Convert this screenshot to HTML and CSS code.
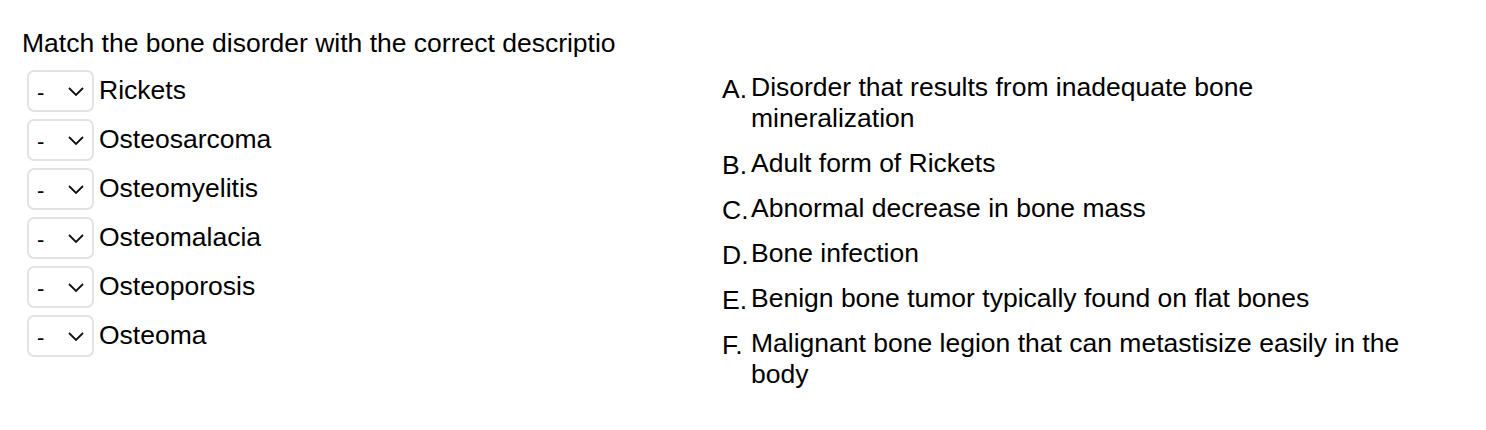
FILE: index.html
```html
<!DOCTYPE html>
<html>
<head>
<meta charset="utf-8">
<link rel="stylesheet" href="styles.css">
</head>
<body>
<div class="page">
  <div class="title">Match the bone disorder with the correct descriptio</div>
  <div class="cols">
    <div class="left">
      <div class="row"><div class="sel"><span class="dash">-</span><svg class="chev" width="16" height="9" viewBox="0 0 16 9"><path d="M1 1 L8 8 L15 1" fill="none" stroke="#111" stroke-width="1.8"/></svg></div><span class="term">Rickets</span></div>
      <div class="row"><div class="sel"><span class="dash">-</span><svg class="chev" width="16" height="9" viewBox="0 0 16 9"><path d="M1 1 L8 8 L15 1" fill="none" stroke="#111" stroke-width="1.8"/></svg></div><span class="term">Osteosarcoma</span></div>
      <div class="row"><div class="sel"><span class="dash">-</span><svg class="chev" width="16" height="9" viewBox="0 0 16 9"><path d="M1 1 L8 8 L15 1" fill="none" stroke="#111" stroke-width="1.8"/></svg></div><span class="term">Osteomyelitis</span></div>
      <div class="row"><div class="sel"><span class="dash">-</span><svg class="chev" width="16" height="9" viewBox="0 0 16 9"><path d="M1 1 L8 8 L15 1" fill="none" stroke="#111" stroke-width="1.8"/></svg></div><span class="term">Osteomalacia</span></div>
      <div class="row"><div class="sel"><span class="dash">-</span><svg class="chev" width="16" height="9" viewBox="0 0 16 9"><path d="M1 1 L8 8 L15 1" fill="none" stroke="#111" stroke-width="1.8"/></svg></div><span class="term">Osteoporosis</span></div>
      <div class="row"><div class="sel"><span class="dash">-</span><svg class="chev" width="16" height="9" viewBox="0 0 16 9"><path d="M1 1 L8 8 L15 1" fill="none" stroke="#111" stroke-width="1.8"/></svg></div><span class="term">Osteoma</span></div>
    </div>
    <div class="right">
      <div class="item"><span class="letter">A.</span><span class="desc">Disorder that results from inadequate bone mineralization</span></div>
      <div class="item"><span class="letter">B.</span><span class="desc">Adult form of Rickets</span></div>
      <div class="item"><span class="letter">C.</span><span class="desc">Abnormal decrease in bone mass</span></div>
      <div class="item"><span class="letter">D.</span><span class="desc">Bone infection</span></div>
      <div class="item"><span class="letter">E.</span><span class="desc">Benign bone tumor typically found on flat bones</span></div>
      <div class="item"><span class="letter">F.</span><span class="desc">Malignant bone legion that can metastisize easily in the body</span></div>
    </div>
  </div>
</div>
</body>
</html>
```

FILE: styles.css
```css
html, body {
  margin: 0;
  padding: 0;
  background: #fff;
}
body {
  font-family: "Liberation Sans", Arial, sans-serif;
  color: #000;
}
.page {
  padding: 28px 0 0 22px;
}
.title {
  font-size: 26.5px;
  line-height: 30px;
}
.cols {
  display: flex;
  margin-top: 12px;
}
.left {
  width: 695px;
  flex: none;
  display: flex;
  flex-direction: column;
  gap: 7px;
  padding-left: 5px;
}
.row {
  display: flex;
  align-items: center;
  height: 42px;
}
.sel {
  box-sizing: border-box;
  width: 67px;
  height: 42px;
  border: 2px solid #e3e3e3;
  border-radius: 7px;
  display: flex;
  align-items: center;
  position: relative;
  flex: none;
}
.dash {
  font-size: 22px;
  margin-left: 8px;
  margin-top: 4px;
}
.chev {
  position: absolute;
  left: 39px;
  top: 15px;
}
.term {
  font-size: 26.5px;
  margin-left: 5px;
  margin-top: -1px;
}
.right {
  display: flex;
  flex-direction: column;
  gap: 14px;
  margin-top: 2px;
}
.item {
  display: flex;
  font-size: 26.5px;
  line-height: 31px;
}
.letter {
  width: 29px;
  flex: none;
  position: relative;
  top: 2px;
}
.desc {
  width: 660px;
}
```
